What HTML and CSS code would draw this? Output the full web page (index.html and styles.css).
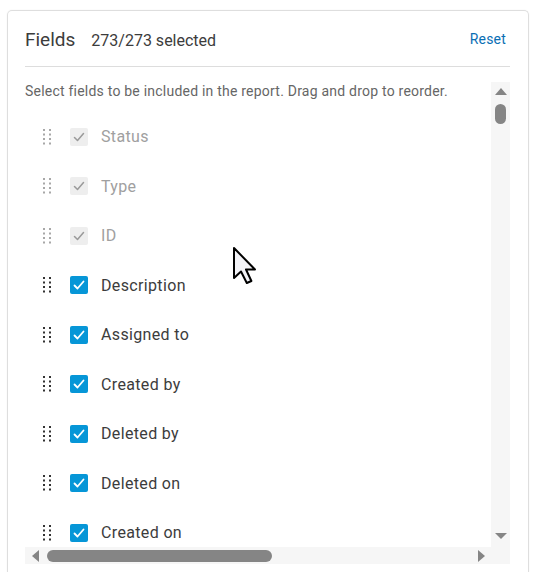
FILE: index.html
```html
<!DOCTYPE html>
<html>
<head>
<meta charset="utf-8">
<link rel="stylesheet" href="styles.css">
</head>
<body>
<div class="card">
  <div class="header">
    <span class="title">Fields</span>
    <span class="count">273/273 selected</span>
    <a class="reset">Reset</a>
  </div>
  <div class="body">
    <div class="main">
      <div class="viewport">
        <p class="desc">Select fields to be included in the report. Drag and drop to reorder.</p>
        <ul class="list">
          <li class="row disabled"><svg class="grip" viewBox="0 0 8 16"><path d="M0 0h2v2H0zM6 0h2v2H6zM0 4.5h2v2H0zM6 4.5h2v2H6zM0 9h2v2H0zM6 9h2v2H6zM0 13.5h2v2H0zM6 13.5h2v2H6z"/></svg><span class="box"><svg viewBox="0 0 18 18"><path d="M4.5 9.5l3 3 6-7"/></svg></span><span class="label">Status</span></li>
          <li class="row disabled"><svg class="grip" viewBox="0 0 8 16"><path d="M0 0h2v2H0zM6 0h2v2H6zM0 4.5h2v2H0zM6 4.5h2v2H6zM0 9h2v2H0zM6 9h2v2H6zM0 13.5h2v2H0zM6 13.5h2v2H6z"/></svg><span class="box"><svg viewBox="0 0 18 18"><path d="M4.5 9.5l3 3 6-7"/></svg></span><span class="label">Type</span></li>
          <li class="row disabled"><svg class="grip" viewBox="0 0 8 16"><path d="M0 0h2v2H0zM6 0h2v2H6zM0 4.5h2v2H0zM6 4.5h2v2H6zM0 9h2v2H0zM6 9h2v2H6zM0 13.5h2v2H0zM6 13.5h2v2H6z"/></svg><span class="box"><svg viewBox="0 0 18 18"><path d="M4.5 9.5l3 3 6-7"/></svg></span><span class="label">ID</span></li>
          <li class="row"><svg class="grip" viewBox="0 0 8 16"><path d="M0 0h2v2H0zM6 0h2v2H6zM0 4.5h2v2H0zM6 4.5h2v2H6zM0 9h2v2H0zM6 9h2v2H6zM0 13.5h2v2H0zM6 13.5h2v2H6z"/></svg><span class="box"><svg viewBox="0 0 18 18"><path d="M4.5 9.5l3 3 6-7"/></svg></span><span class="label">Description</span></li>
          <li class="row"><svg class="grip" viewBox="0 0 8 16"><path d="M0 0h2v2H0zM6 0h2v2H6zM0 4.5h2v2H0zM6 4.5h2v2H6zM0 9h2v2H0zM6 9h2v2H6zM0 13.5h2v2H0zM6 13.5h2v2H6z"/></svg><span class="box"><svg viewBox="0 0 18 18"><path d="M4.5 9.5l3 3 6-7"/></svg></span><span class="label">Assigned to</span></li>
          <li class="row"><svg class="grip" viewBox="0 0 8 16"><path d="M0 0h2v2H0zM6 0h2v2H6zM0 4.5h2v2H0zM6 4.5h2v2H6zM0 9h2v2H0zM6 9h2v2H6zM0 13.5h2v2H0zM6 13.5h2v2H6z"/></svg><span class="box"><svg viewBox="0 0 18 18"><path d="M4.5 9.5l3 3 6-7"/></svg></span><span class="label">Created by</span></li>
          <li class="row"><svg class="grip" viewBox="0 0 8 16"><path d="M0 0h2v2H0zM6 0h2v2H6zM0 4.5h2v2H0zM6 4.5h2v2H6zM0 9h2v2H0zM6 9h2v2H6zM0 13.5h2v2H0zM6 13.5h2v2H6z"/></svg><span class="box"><svg viewBox="0 0 18 18"><path d="M4.5 9.5l3 3 6-7"/></svg></span><span class="label">Deleted by</span></li>
          <li class="row"><svg class="grip" viewBox="0 0 8 16"><path d="M0 0h2v2H0zM6 0h2v2H6zM0 4.5h2v2H0zM6 4.5h2v2H6zM0 9h2v2H0zM6 9h2v2H6zM0 13.5h2v2H0zM6 13.5h2v2H6z"/></svg><span class="box"><svg viewBox="0 0 18 18"><path d="M4.5 9.5l3 3 6-7"/></svg></span><span class="label">Deleted on</span></li>
          <li class="row"><svg class="grip" viewBox="0 0 8 16"><path d="M0 0h2v2H0zM6 0h2v2H6zM0 4.5h2v2H0zM6 4.5h2v2H6zM0 9h2v2H0zM6 9h2v2H6zM0 13.5h2v2H0zM6 13.5h2v2H6z"/></svg><span class="box"><svg viewBox="0 0 18 18"><path d="M4.5 9.5l3 3 6-7"/></svg></span><span class="label">Created on</span></li>
        </ul>
      </div>
      <div class="vscroll">
        <span class="arrow up"></span>
        <span class="vthumb"></span>
        <span class="vspace"></span>
        <span class="arrow down"></span>
      </div>
    </div>
    <div class="hscroll">
      <span class="arrow left"></span>
      <span class="hthumb"></span>
      <span class="hspace"></span>
      <span class="arrow right"></span>
      <span class="corner"></span>
    </div>
  </div>
</div>
<svg class="cursor" width="27" height="39" viewBox="0 0 27 39"><path d="M2 2 L2 32 L9 25.5 L14.8 37 L19.4 35 L14 23.5 L23 23.5 Z" fill="#f3f3f7" stroke="#000" stroke-width="2" stroke-linejoin="round"/></svg>
</body>
</html>
```
FILE: styles.css
```css
* { box-sizing: border-box; }
body {
  margin: 0;
  background: #fff;
  font-family: Roboto, "Liberation Sans", sans-serif;
  color: #3c3c3c;
  width: 536px;
  height: 572px;
  overflow: hidden;
  position: relative;
}
.card {
  margin: 10px 7px 0 7px;
  height: 562px;
  border: 1px solid #dedede;
  border-bottom: none;
  border-radius: 5px 5px 0 0;
  padding: 0 18px 0 17px;
  box-shadow: 0 0 2px rgba(0,0,0,0.05);
}
.header {
  height: 56px;
  display: flex;
  align-items: center;
  border-bottom: 1px solid #dddddd;
  padding-top: 1px;
}
.title {
  font-size: 19px;
  color: #3c3c3c;
  margin-right: 16px;
}
.count {
  font-size: 16px;
  color: #3c3c3c;
  padding-top: 2px;
}
.reset {
  margin-left: auto;
  font-size: 14px;
  letter-spacing: 0.2px;
  color: #0a6eb4;
  margin-right: 4px;
}
.body {
  margin-top: 15px;
}
.main {
  display: flex;
  height: 465px;
}
.viewport {
  flex: 1;
  overflow: hidden;
}
.desc {
  margin: 0;
  font-size: 14px;
  letter-spacing: 0.22px;
  line-height: 19px;
  color: #666;
  white-space: nowrap;
}
.list {
  list-style: none;
  margin: 11px 0 0 0;
  padding: 0;
}
.row {
  height: 49.5px;
  display: flex;
  align-items: center;
  padding-left: 18px;
}
.grip {
  width: 8px;
  height: 16px;
  fill: #333;
  margin-right: 19px;
}
.disabled .grip {
  fill: #a8a8a8;
}
.box {
  width: 18px;
  height: 18px;
  border-radius: 2px;
  background: #0696d7;
  display: flex;
  margin-right: 13px;
}
.box svg {
  width: 18px;
  height: 18px;
  fill: none;
  stroke: #fff;
  stroke-width: 1.8;
  stroke-linecap: round;
  stroke-linejoin: round;
}
.disabled .box {
  background: #eeeeee;
}
.disabled .box svg {
  stroke: #9a9a9a;
  stroke-width: 1.5;
}
.label {
  font-size: 16px;
  letter-spacing: 0.35px;
  color: #3c3c3c;
}
.disabled .label {
  color: #a0a0a0;
}
.vscroll {
  width: 19px;
  background: #f6f6f6;
  display: flex;
  flex-direction: column;
  align-items: center;
  padding: 6px 0 8px;
}
.vthumb {
  width: 11px;
  height: 20px;
  border-radius: 6px;
  background: #858585;
  margin-top: 9px;
}
.vspace { flex: 1; }
.arrow {
  width: 0;
  height: 0;
  border: 0 solid transparent;
}
.arrow.up {
  border-width: 0 6px 7px 6px;
  border-bottom-color: #858585;
}
.arrow.down {
  border-width: 6px 6px 0 6px;
  border-top-color: #858585;
}
.hscroll {
  height: 17px;
  background: #f6f6f6;
  display: flex;
  align-items: center;
  padding-left: 7px;
}
.arrow.left {
  border-width: 6px 7px 6px 0;
  border-right-color: #858585;
}
.arrow.right {
  border-width: 6px 0 6px 7px;
  border-left-color: #858585;
}
.hthumb {
  width: 225px;
  height: 12px;
  border-radius: 6px;
  background: #858585;
  margin-left: 8px;
}
.hspace { flex: 1; }
.corner { width: 25px; }
.cursor {
  position: absolute;
  left: 232px;
  top: 246px;
}
```
